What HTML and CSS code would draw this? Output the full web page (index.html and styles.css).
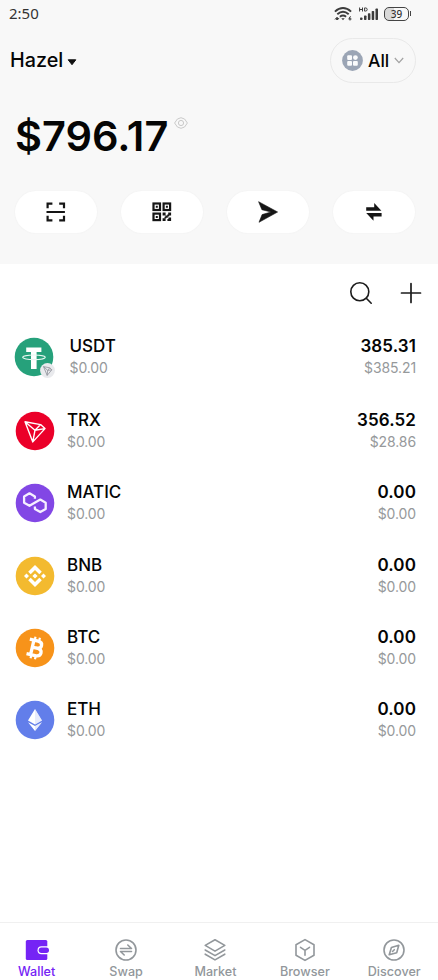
FILE: index.html
```html
<!DOCTYPE html>
<html lang="en">
<head>
<meta charset="utf-8">
<title>Wallet</title>
<link rel="stylesheet" href="styles.css">
</head>
<body>
<div class="app">
  <header class="top">
    <div class="status">
      <span class="clock">2:50</span>
      <div class="indicators">
        <svg class="wifi" width="18" height="14" viewBox="0 0 18 14" fill="none" stroke="#3c3c3c" stroke-width="1.9">
          <path d="M.9 4.6Q9-2.4 17.1 4.6M3.3 7.2Q9 2.2 14.7 7.2M5.9 9.7Q9 7.2 12.1 9.7"/>
          <path d="M7.3 11.2h3.4L9 13.2z" fill="#3c3c3c" stroke="none"/>
          <path d="M1 12.5l1.6-2v2.5M3.5 10.3v2.6l1.6-2" stroke-width="1"/>
          <path d="M16.8 9.5q-1.7.3-1.6 2.3" stroke-width="1"/><circle cx="16" cy="12" r="1" stroke-width="1"/>
        </svg>
        <svg class="signal" width="19" height="14" viewBox="0 0 19 14">
          <g fill="none" stroke="#3c3c3c" stroke-width="1"><path d="M.6.5v4M3.5.5v4M.6 2.5h2.9M5.6.9v3.2h.8q1.8 0 1.8-1.6T6.4.9z"/></g>
          <g fill="#3c3c3c"><rect x="1" y="10.5" width="2.5" height="2.5" rx=".8"/><rect x="5" y="8.5" width="2.5" height="4.5" rx=".7"/><rect x="8.9" y="6.3" width="2.5" height="6.7" rx=".7"/><rect x="12.7" y="4" width="2.5" height="9" rx=".7"/><rect x="16.5" y="1.5" width="2.5" height="11.5" rx=".7"/></g>
        </svg>
        <div class="battery"><span>39</span></div>
      </div>
    </div>
    <div class="account">
      <div class="name">Hazel<svg width="10" height="7" viewBox="0 0 10 7"><path d="M1.2.8h7.6L5 5.7z" fill="#111" stroke="#111" stroke-linejoin="round"/></svg></div>
      <div class="network">
        <svg width="21" height="21" viewBox="0 0 21 21"><circle cx="10.5" cy="10.5" r="10.4" fill="#9ba5b5"/><g fill="#fafbfc"><rect x="5.2" y="5.2" width="4.8" height="4.8" rx="1"/><circle cx="13.4" cy="7.6" r="2.4"/><rect x="5.2" y="11" width="4.8" height="4.8" rx="1"/><rect x="11" y="11" width="4.8" height="4.8" rx="1"/></g></svg>
        <span>All</span>
        <svg class="chevron" width="10" height="7" viewBox="0 0 10 7" fill="none" stroke="#a2a2a2" stroke-width="1.2"><path d="M.8 1L5 5.6 9.2 1"/></svg>
      </div>
    </div>
    <div class="balance">
      <span>$796.17</span>
      <svg width="14" height="12" viewBox="0 0 14 12" fill="none" stroke="#c9c9c9"><path d="M.6 6Q3 .7 7 .7T13.4 6Q11 11.3 7 11.3T.6 6z"/><circle cx="7" cy="6" r="2.6"/></svg>
    </div>
    <div class="actions">
      <div class="pill"><svg width="20" height="20" viewBox="0 0 20 20" fill="none" stroke="#151515" stroke-width="2.2"><path d="M1.6 6.3V1.6h4.8M13.2 1.6H18v4.7M1.6 13.7v4.7h4.8M13.2 18.4H18v-4.7M.5 10h18.4"/></svg></div>
      <div class="pill"><svg width="20" height="20" viewBox="0 0 20 20"><g fill="none" stroke="#151515" stroke-width="2.2"><rect x="1.5" y="1.5" width="6.5" height="6.5"/><rect x="11.6" y="1.5" width="6.5" height="6.5"/><rect x="1.5" y="11.6" width="6.5" height="6.5"/></g><g fill="#151515"><path d="M3.8 3.8h2v2h-2zM13.9 3.8h2v2h-2zM3.8 13.9h2v2h-2zM10.6 10.6h3v3h-3zM13.4 13.4h2.4v2.4h-2.4zM16.2 10.6h2.9v2.8h-2.9zM15.2 12.6h2v1.8h-2zM10.6 16.2h3v2.9h-3zM16.4 15.4h2.7v3.7h-3.7v-2h1z"/><path d="M12.5 14.7h1.8v1.8h-1.8z"/></g></svg></div>
      <div class="pill"><svg width="20" height="22" viewBox="0 0 20 22"><path d="M.6.7L19.6 11 1 21.3 4.1 13.6 13 11 3.9 8.7z" fill="#151515" stroke="#151515" stroke-width=".6"/></svg></div>
      <div class="pill"><svg width="18" height="20" viewBox="0 0 18 20" fill="#151515"><path d="M1.2 5.2h8V1.1l7.2 7.7H1.2zM16.6 11H1.2l7.3 7.7v-4.1h8.1z"/></svg></div>
    </div>
  </header>
  <main>
    <div class="tools">
      <svg width="24" height="24" viewBox="0 0 24 24" fill="none" stroke="#1c1c1c" stroke-width="1.6" stroke-linecap="round"><circle cx="10.8" cy="10.8" r="9"/><path d="M17.3 17.3l4.9 4.9"/></svg>
      <svg width="22" height="22" viewBox="0 0 22 22" fill="none" stroke="#1c1c1c" stroke-width="1.7" stroke-linecap="round"><path d="M1.5 11h19M11 1.5v19"/></svg>
    </div>
    <div class="tokens">
      <div class="token token-usdt">
        <div class="coin">
          <svg width="40" height="40" viewBox="0 0 40 40"><circle cx="20" cy="20" r="19.3" fill="#26a17b"/><path d="M12.2 10.5h15.2v4.5h-4.8V32h-5.6V15h-4.8z" fill="#fff"/><ellipse cx="20" cy="20.3" rx="11.3" ry="2.3" fill="none" stroke="#e8f7f1" stroke-width="1.1"/></svg>
          <svg class="badge" width="15" height="15" viewBox="0 0 15 15"><circle cx="7.5" cy="7.5" r="7.4" fill="#e9eaed"/><path d="M3.5 3.6l6.3 1.2 2 2-4.6 5.6zM3.5 3.6l4.2 3.8 4.1-.6M7.7 7.4l-.5 5M7.7 7.4l2.1-2.6" fill="none" stroke="#8f929a" stroke-width=".8"/></svg>
        </div>
        <div class="info"><b>USDT</b><span>$0.00</span></div>
        <div class="amount"><b>385.31</b><span>$385.21</span></div>
      </div>
      <div class="token">
        <div class="coin"><svg width="40" height="40" viewBox="0 0 40 40"><circle cx="20" cy="20" r="19.3" fill="#eb0029"/><path d="M10 10.8l15.6 2.8 4.4 4-12.2 13.3zM10 10.8l10 8.4 10-1.6M20 19.2l-2.2 11.7M20 19.2l5.6-5.6" fill="none" stroke="#fff" stroke-width="1.4" stroke-linejoin="round"/></svg></div>
        <div class="info"><b>TRX</b><span>$0.00</span></div>
        <div class="amount"><b>356.52</b><span>$28.86</span></div>
      </div>
      <div class="token">
        <div class="coin"><svg width="40" height="40" viewBox="0 0 40 40"><circle cx="20" cy="20" r="19.3" fill="#8247e5"/><path d="M19.9 15.8v-2.4l-5.4-3.1-5.4 3.1v6.3l5.4 3.1 10.8-6.2 5.4 3.1V26l-5.4 3.1-5.4-3.1v-2.4" fill="none" stroke="#f6f0ff" stroke-width="2.3" stroke-linejoin="round"/></svg></div>
        <div class="info"><b>MATIC</b><span>$0.00</span></div>
        <div class="amount"><b>0.00</b><span>$0.00</span></div>
      </div>
      <div class="token">
        <div class="coin"><svg width="40" height="40" viewBox="0 0 40 40"><circle cx="20" cy="20" r="19.3" fill="#f3ba2f"/><path d="M20 9l6.8 6.8-2.5 2.5-4.3-4.3-4.3 4.3-2.5-2.5zM20 31l-6.8-6.8 2.5-2.5 4.3 4.3 4.3-4.3 2.5 2.5zM20 17.4l2.6 2.6-2.6 2.6-2.6-2.6zM11.5 17.5L14 20l-2.5 2.5L9 20zM28.5 17.5L31 20l-2.5 2.5L26 20z" fill="#fff"/></svg></div>
        <div class="info"><b>BNB</b><span>$0.00</span></div>
        <div class="amount"><b>0.00</b><span>$0.00</span></div>
      </div>
      <div class="token">
        <div class="coin"><svg width="40" height="40" viewBox="0 0 40 40"><circle cx="20" cy="20" r="19.3" fill="#f7931a"/><g transform="rotate(13 20 20)" fill="none" stroke="#fff"><path d="M13 12.6h8.5q4.3 0 4.3 3.5t-4.3 3.6H17M21 19.7q6 0 6 3.8t-5.2 3.9H13M17.2 12.6v14.8" stroke-width="3.3"/><path d="M18 9v4M22.5 9v4M18 27v4M22.5 27v4" stroke-width="2.2"/></g></svg></div>
        <div class="info"><b>BTC</b><span>$0.00</span></div>
        <div class="amount"><b>0.00</b><span>$0.00</span></div>
      </div>
      <div class="token">
        <div class="coin"><svg width="40" height="40" viewBox="0 0 40 40"><circle cx="20" cy="20" r="19.3" fill="#627eea"/><path d="M20 9l-7 11.6L20 24.5l7-3.9zM13 22.2L20 31l7-8.8-7 3.8z" fill="#fff"/><path d="M20 9v8.5l7 3.1zM20 17.5v7l7-3.9zM20 26v5l7-8.8z" fill="#cfd8fa" opacity=".5"/></svg></div>
        <div class="info"><b>ETH</b><span>$0.00</span></div>
        <div class="amount"><b>0.00</b><span>$0.00</span></div>
      </div>
    </div>
  </main>
  <nav class="tabs">
    <div class="tab active"><svg width="24" height="24" viewBox="0 0 24 24"><path d="M2.3 2h18.500q1.500 0 1.500 1.500v17q0 1.500-1.500 1.500H2.300Q.8 22 .8 20.500v-17Q.8 2 2.300 2z" fill="#7524f5"/><path d="M25 8.200h-8.500a4 4 0 000 8H25" fill="#fff"/><rect x="13.700" y="9.500" width="10.300" height="5.400" rx="2.700" fill="#7524f5"/></svg><span>Wallet</span></div>
    <div class="tab"><svg width="24" height="24" viewBox="0 0 24 24"><circle cx="12" cy="12" r="10"/><path d="M6.500 10.500h11L13.800 7M17.500 13.500h-11l3.700 3.500"/></svg><span>Swap</span></div>
    <div class="tab"><svg width="24" height="24" viewBox="0 0 24 24"><path d="M12 1.800l9.800 5.600-9.800 5.700-9.800-5.700zM2.200 12l9.800 5.600 9.800-5.600M2.200 16.200l9.800 5.700 9.800-5.700"/></svg><span>Market</span></div>
    <div class="tab"><svg width="24" height="24" viewBox="0 0 24 24"><path d="M12 1.600l9 5.200v10.400l-9 5.200-9-5.200V6.800zM7.500 9.300l4.500 3 4.500-3M12 12.300v5"/></svg><span>Browser</span></div>
    <div class="tab"><svg width="24" height="24" viewBox="0 0 24 24"><circle cx="12" cy="12" r="10"/><path d="M16.800 7.200l-2.100 7.500-7.500 2.100 2.200-7.400zM10.500 13.500l1.800-1.800"/></svg><span>Discover</span></div>
  </nav>
</div>
</body>
</html>
```
FILE: styles.css
```css
* { box-sizing: border-box; }
body { margin: 0; background: #fff; font-family: Inter, "Liberation Sans", sans-serif; color: #050505; }
svg { display: block; flex: none; }
.app { width: 438px; height: 980px; display: flex; flex-direction: column; overflow: hidden; }
.top { height: 264px; background: #f8f8f8; flex: none; }

.status { height: 27px; padding: 0 29px 0 9px; display: flex; align-items: center; justify-content: space-between; }
.clock { font: 400 15px/27px "Noto Sans", sans-serif; color: #333; }
.indicators { display: flex; align-items: center; }
.signal { margin: 0 6px 0 7px; }
.battery { position: relative; width: 25px; height: 14px; border: 1.5px solid #444; border-radius: 5px; background: linear-gradient(90deg, #d9d9d9 39%, #f8f8f8 39%); font: 500 10px/12px "Noto Sans", sans-serif; color: #333; text-align: center; }
.battery::after { content: ""; position: absolute; right: -3px; top: 3px; width: 1px; height: 5px; background: #444; }

.account { height: 67px; padding: 0 22px 0 10px; display: flex; align-items: center; justify-content: space-between; }
.name { display: flex; align-items: center; gap: 4px; font-size: 19.8px; line-height: 24px; font-weight: 500; padding-bottom: 1px; }
.name svg { margin-top: 4px; }
.network { width: 86px; height: 45px; border: 1.5px solid #e9e9e9; border-radius: 23px; display: flex; align-items: center; padding-left: 11px; font-size: 17.5px; font-weight: 500; }
.network span { margin-left: 5px; }
.chevron { margin-left: 5px; }

.balance { height: 97px; padding: 17px 0 0 15px; display: flex; align-items: flex-start; }
.balance span { font-size: 41.5px; line-height: 50px; font-weight: 600; }
.balance svg { margin: 6px 0 0 6px; }
.actions { display: flex; gap: 24px; padding-left: 15px; }
.pill { width: 82px; height: 42px; border-radius: 21px; background: #fff; display: flex; align-items: center; justify-content: center; box-shadow: 0 0 2px #eee; }

main { flex: 1; }
.tools { height: 59px; padding: 0 16px 1px 0; display: flex; justify-content: flex-end; align-items: center; gap: 27px; }
.token { height: 72.3px; padding: 0 22px 0 15px; display: flex; align-items: flex-start; }
.token-usdt { height: 74px; padding-left: 14px; }
.coin { position: relative; width: 40px; height: 40px; margin-top: 14px; }
.badge { position: absolute; right: -1px; bottom: -1px; }
.info, .amount { display: flex; flex-direction: column; padding-top: 12px; }
.info { margin-left: 12px; }
.token-usdt .info { margin-left: 15.5px; }
.amount { margin-left: auto; align-items: flex-end; }
.token b { font-size: 17px; line-height: 22px; font-weight: 600; }
.info b { font-weight: 550; }
.amount b { letter-spacing: .1px; }
.token span { font-size: 14px; line-height: 21px; color: #96999b; letter-spacing: -.1px; }

.tabs { height: 58px; flex: none; border-top: 1px solid #f0f0f0; display: grid; grid-template-columns: repeat(5, 89.4px); margin-left: -8px; width: 448px; padding-top: 15px; }
.tab { display: flex; flex-direction: column; align-items: center; color: #92979b; }
.tab svg { fill: none; stroke: #92979b; stroke-width: 1.6; stroke-linejoin: round; stroke-linecap: round; }
.tab.active svg { stroke: none; }
.tab span { font-size: 12.6px; line-height: 16px; font-weight: 500; margin-top: 2px; }
.active { color: #7524f5; }
```
